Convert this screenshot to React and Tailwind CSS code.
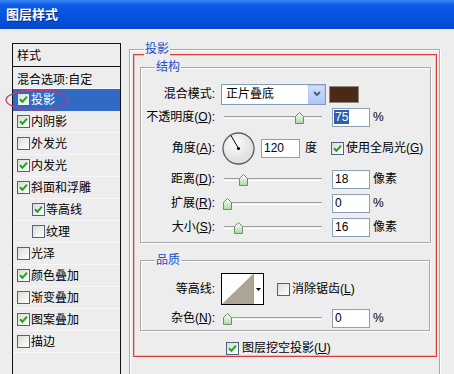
import React from "react"

const font = "font-['Liberation_Sans','Noto_Sans_CJK_SC',sans-serif]"

const Check = ({ checked }) => (
  <span className="w-[13px] h-[13px] shrink-0 border border-[#4f6282] bg-[linear-gradient(135deg,#dcdcd4,#ffffff)] flex items-center justify-center">
    {checked && (
      <svg width="9" height="9" viewBox="0 0 9 9">
        <path d="M1 4.2 L3.4 6.8 L8 1.6" stroke="#21a121" strokeWidth="2" fill="none" />
      </svg>
    )}
  </span>
)

const Slider = ({ pos }) => (
  <div className="relative w-[98px] h-[13px] ml-[8px] shrink-0">
    <div className="absolute left-0 right-0 top-[5px] h-[3px] border-t border-[#9c9c9c] border-b border-b-white" />
    <svg className="absolute top-[1px]" style={{ left: pos - 4 }} width="9" height="12" viewBox="0 0 9 12">
      <defs>
        <linearGradient id={"tg" + pos} x1="0" y1="0" x2="0" y2="1">
          <stop offset="0" stopColor="#ffffff" />
          <stop offset="1" stopColor="#a9d8a0" />
        </linearGradient>
      </defs>
      <path d="M0.5 4.5 L4.5 0.5 L8.5 4.5 V11.5 H0.5 Z" fill={"url(#tg" + pos + ")"} stroke="#6e8e6e" />
    </svg>
  </div>
)

const Field = ({ value, selected }) => (
  <div className="w-[38px] h-[19px] ml-[10px] shrink-0 border border-[#8ea0b6] bg-white flex items-center pl-[1px]">
    <span className={selected ? "bg-[#2f5fb0] text-white px-[1px] leading-[14px]" : "px-[1px] leading-[14px]"}>{value}</span>
  </div>
)

const Label = ({ children }) => (
  <div className="w-[75px] shrink-0 text-right pr-[1px]">{children}</div>
)

const Group = ({ title, className, children }) => (
  <div className={"relative border border-[#a9a9a9] shadow-[inset_1px_1px_0_#ffffff,1px_1px_0_#ffffff] " + className}>
    <span className="absolute left-[14px] top-[-8px] px-[1px] bg-[#ededed] text-[#1a4fc4] leading-[14px]">{title}</span>
    {children}
  </div>
)

const items = [
  { label: "投影", checked: true, selected: true },
  { label: "内阴影", checked: true },
  { label: "外发光", checked: false },
  { label: "内发光", checked: true },
  { label: "斜面和浮雕", checked: true },
  { label: "等高线", checked: true, sub: true },
  { label: "纹理", checked: false, sub: true },
  { label: "光泽", checked: false },
  { label: "颜色叠加", checked: true },
  { label: "渐变叠加", checked: false },
  { label: "图案叠加", checked: true },
  { label: "描边", checked: false },
]

export default function App() {
  return (
    <div className={"relative w-[454px] h-[374px] overflow-hidden bg-[#ededed] text-[12px] leading-[14px] text-black " + font}>
      <div className="h-[29px] flex items-center pl-[6px] bg-[linear-gradient(180deg,#3a86f2_0%,#0b5ae6_18%,#0552df_60%,#0747cb_100%)]">
        <span className="text-white text-[13px] font-bold [text-shadow:1px_1px_0_#0b2a7a]">图层样式</span>
      </div>

      <div className="flex pl-[12px] pt-[14px]">
        {/* style list */}
        <div className="w-[109px] h-[340px] shrink-0 border border-[#111111]">
          <div className="h-[23px] border-b border-[#111111] flex items-center pl-[4px] pt-[2px]">样式</div>
          <div className="h-[22px] flex items-end pb-[1px] pl-[4px] border-b border-[#f7f7f7]">混合选项:自定</div>
          {items.map((it) => (
            <div
              key={it.label}
              className={
                "h-[22px] flex items-center gap-[1px] border-b " +
                (it.sub ? "pl-[19px] " : "pl-[4px] ") +
                (it.selected ? "bg-[#316ac5] text-white border-[#316ac5]" : "border-[#f7f7f7]")
              }
            >
              <Check checked={it.checked} />
              <span>{it.label}</span>
            </div>
          ))}
        </div>

        {/* drop shadow panel */}
        <Group title="投影" className="ml-[8px] mt-[6px] w-[311px] h-[340px] shrink-0">
          <div className="ml-[3px] mt-[4px] w-[304px] h-[303px] border border-[#d83c3c] shadow-[inset_0_0_0_1px_#f3bcbc]">
            <Group title="结构" className="ml-[6px] mt-[12px] w-[291px] h-[176px]">
              <div className="pt-[15px]">
                <div className="h-[22px] flex items-center">
                  <Label>混合模式:</Label>
                  <div className="ml-[5px] w-[105px] h-[21px] border border-[#7f9db9] bg-white flex items-center">
                    <span className="flex-1 pl-[4px]">正片叠底</span>
                    <span className="w-[17px] h-[19px] border border-[#b4c6ee] bg-[linear-gradient(#d0defd,#afc6f7)] flex items-center justify-center">
                      <svg width="8" height="6" viewBox="0 0 8 6">
                        <path d="M1 1 L4 4 L7 1" stroke="#4d6185" strokeWidth="2" fill="none" />
                      </svg>
                    </span>
                  </div>
                  <div className="ml-[3px] w-[30px] h-[17px] border border-[#8a8a8a] bg-[#4a2a12]" />
                </div>

                <div className="h-[24px] flex items-center">
                  <Label>不透明度(<u>O</u>):</Label>
                  <Slider pos={75} />
                  <Field value="75" selected />
                  <span className="ml-[3px]">%</span>
                </div>

                <div className="h-[38px] flex items-center">
                  <Label>角度(<u>A</u>):</Label>
                  <svg className="ml-[6px] shrink-0" width="33" height="33" viewBox="0 0 33 33">
                    <defs>
                      <radialGradient id="dial" cx="40%" cy="35%">
                        <stop offset="0" stopColor="#ffffff" />
                        <stop offset="1" stopColor="#e2e2e2" />
                      </radialGradient>
                    </defs>
                    <circle cx="16.5" cy="16.5" r="15.5" fill="url(#dial)" stroke="#55606e" strokeWidth="1.3" />
                    <line x1="16.5" y1="16.5" x2="9" y2="3.5" stroke="#000" strokeWidth="1" />
                    <circle cx="16.5" cy="16.5" r="1.6" fill="#000" />
                  </svg>
                  <div className="ml-[6px] w-[39px] h-[19px] border border-[#8ea0b6] bg-white flex items-center pl-[2px]">120</div>
                  <span className="ml-[5px]">度</span>
                  <span className="ml-[14px]"><Check checked /></span>
                  <span className="ml-[2px]">使用全局光(<u>G</u>)</span>
                </div>

                <div className="h-[24px] flex items-center">
                  <Label>距离(<u>D</u>):</Label>
                  <Slider pos={19} />
                  <Field value="18" />
                  <span className="ml-[3px]">像素</span>
                </div>

                <div className="h-[24px] flex items-center">
                  <Label>扩展(<u>R</u>):</Label>
                  <Slider pos={3} />
                  <Field value="0" />
                  <span className="ml-[3px]">%</span>
                </div>

                <div className="h-[24px] flex items-center">
                  <Label>大小(<u>S</u>):</Label>
                  <Slider pos={14} />
                  <Field value="16" />
                  <span className="ml-[3px]">像素</span>
                </div>
              </div>
            </Group>

            <Group title="品质" className="ml-[6px] mt-[17px] w-[290px] h-[71px]">
              <div className="pt-[12px]">
                <div className="h-[32px] flex items-center">
                  <Label>等高线:</Label>
                  <div className="ml-[5px] w-[43px] h-[32px] border border-black bg-white flex">
                    <svg width="31" height="30" viewBox="0 0 31 30" className="shrink-0">
                      <path d="M0 30 L31 0 L31 30 Z" fill="#aaa595" />
                    </svg>
                    <div className="flex-1 border-l border-[#9a9a9a] flex items-center justify-center">
                      <svg width="5" height="3" viewBox="0 0 5 3">
                        <path d="M0 0 H5 L2.5 3 Z" fill="#000" />
                      </svg>
                    </div>
                  </div>
                  <span className="ml-[13px]"><Check checked={false} /></span>
                  <span className="ml-[2px]">消除锯齿(<u>L</u>)</span>
                </div>
                <div className="h-[24px] mt-[1px] flex items-center">
                  <Label>杂色(<u>N</u>):</Label>
                  <Slider pos={3} />
                  <Field value="0" />
                  <span className="ml-[3px]">%</span>
                </div>
              </div>
            </Group>

            <div className="mt-[10px] pl-[92px] flex items-center">
              <Check checked />
              <span className="ml-[3px]">图层挖空投影(<u>U</u>)</span>
            </div>
          </div>
        </Group>
      </div>

      {/* red annotation ellipse */}
      <svg className="absolute left-[4px] top-[88px]" width="66" height="24" viewBox="0 0 66 24">
        <ellipse cx="33" cy="12" rx="31" ry="10" fill="none" stroke="#c23a78" strokeWidth="1.3" />
      </svg>
    </div>
  )
}
